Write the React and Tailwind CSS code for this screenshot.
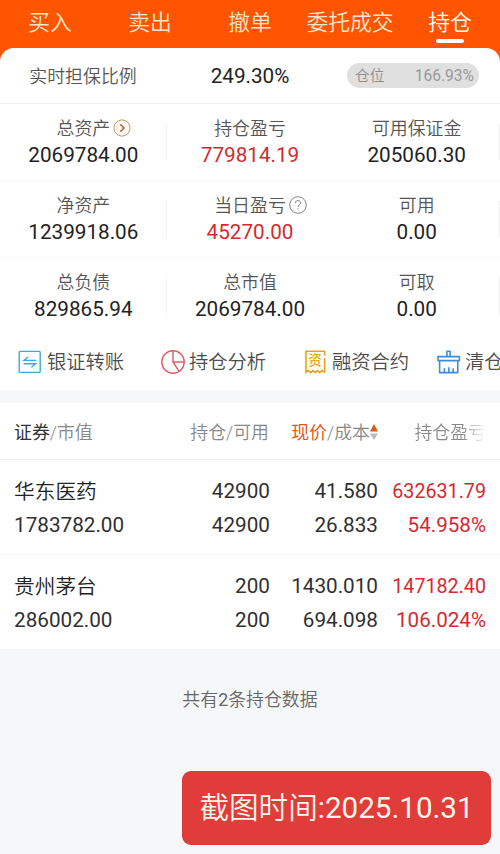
import React from "react";

const tabs = [
  { label: "买入" },
  { label: "卖出" },
  { label: "撤单" },
  { label: "委托成交" },
  { label: "持仓", active: true },
];

function ArrowBadge() {
  return (
    <svg className="h-[18px] w-[18px]" viewBox="0 0 18 18" fill="none">
      <circle cx="9" cy="9" r="8.1" stroke="#c9936c" strokeWidth="1" fill="#fffaf3" />
      <path d="M7.3 5.2 11 9l-3.7 3.8" stroke="#a9602f" strokeWidth="1.5" />
    </svg>
  );
}

function HelpBadge() {
  return (
    <svg className="h-[18px] w-[18px]" viewBox="0 0 18 18" fill="none" stroke="#777" strokeWidth="0.9">
      <circle cx="9" cy="9" r="8.3" />
      <path d="M6.4 7c0-3.3 5.2-3.2 5.2-.2 0 1.9-2.5 2-2.5 4.2M9.1 12.3v1.3" />
    </svg>
  );
}

const summary = [
  [
    { label: "总资产", value: "2069784.00", badge: <ArrowBadge /> },
    { label: "持仓盈亏", value: "779814.19", red: true },
    { label: "可用保证金", value: "205060.30" },
  ],
  [
    { label: "净资产", value: "1239918.06" },
    { label: "当日盈亏", value: "45270.00", red: true, badge: <HelpBadge /> },
    { label: "可用", value: "0.00" },
  ],
  [
    { label: "总负债", value: "829865.94" },
    { label: "总市值", value: "2069784.00" },
    { label: "可取", value: "0.00" },
  ],
];

const positions = [
  { name: "华东医药", value: "1783782.00", held: "42900", free: "42900", price: "41.580", cost: "26.833", gain: "632631.79", rate: "54.958%" },
  { name: "贵州茅台", value: "286002.00", held: "200", free: "200", price: "1430.010", cost: "694.098", gain: "147182.40", rate: "106.024%" },
];

function TransferIcon() {
  return (
    <svg className="h-6 w-6 shrink-0" viewBox="0 0 24 24" fill="none" stroke="#45a5d8" strokeWidth="1.4">
      <rect x="1.2" y="1.4" width="21" height="21" rx="1" />
      <path d="M18.2 10.4H6L10.2 7M5.6 13.8h12L13.4 17.2" />
    </svg>
  );
}

function PieIcon() {
  return (
    <svg className="h-6 w-6 shrink-0" viewBox="0 0 24 24" fill="none" stroke="#df5d68" strokeWidth="1.4">
      <circle cx="12" cy="12" r="11.2" />
      <path d="M12 .8V12h11.2M12 12l6.2 9.3" />
    </svg>
  );
}

function ContractIcon() {
  return (
    <span className="relative flex h-6 w-[22px] shrink-0 items-center justify-center">
      <svg className="absolute inset-0 h-6 w-[22px]" viewBox="0 0 22 24" fill="none" stroke="#e9a31f" strokeWidth="1.6">
        <path d="M19.6 5.5V1.3H1v20.8l2.3-1.6 2.3 2.2 2.3-2.2 2.3 2.2 2.3-2.2 2.3 2.2 2.3-2.2 2.5 1.6V8" />
      </svg>
      <span className="mr-[2px] mb-[3px] text-[13.5px] leading-[20px] font-medium text-[#e9a31f]">资</span>
    </span>
  );
}

function BrushIcon() {
  return (
    <svg className="h-6 w-6 shrink-0" viewBox="0 0 24 24" fill="none" stroke="#3c8edb" strokeWidth="1.6" strokeLinejoin="round">
      <path d="M9.9 6.6V1.2h3.2v5.4M1 6.6h21.4v4H1zM2.6 10.6v12h18.2v-12M7.4 22.6v-4.4M11.8 22.6v-5.4M16.2 22.6v-4.4" />
    </svg>
  );
}

const tools = [
  { label: "银证转账", icon: <TransferIcon />, box: "w-[143px]", gap: "gap-[5px]" },
  { label: "持仓分析", icon: <PieIcon />, box: "w-[144px]", gap: "gap-1" },
  { label: "融资合约", icon: <ContractIcon />, box: "w-[132px]", gap: "gap-[5px]" },
  { label: "清仓", icon: <BrushIcon />, box: "w-[64px]", gap: "gap-1" },
];

function Metric({ item, divider }) {
  return (
    <div className="relative flex flex-1 flex-col items-center pt-[11px]">
      <div className="relative text-[17.9px] leading-[27px] font-[350] text-[#555]">
        {item.label}
        {item.badge && <span className="absolute top-[4px] left-full ml-[3px]">{item.badge}</span>}
      </div>
      <div className={`text-[20.7px] leading-[27px] ${item.red ? "text-[#d7282f]" : "text-[#222]"}`}>{item.value}</div>
      {divider && <i className="absolute top-[20px] right-0 h-9 w-px bg-[#f0f0f0]" />}
    </div>
  );
}

export default function App() {
  return (
    <div className="flex h-[854px] w-[500px] flex-col overflow-hidden bg-[#f6f7f9] font-['Roboto','Noto_Sans_CJK_SC',sans-serif] whitespace-nowrap text-[#303030]">
      <header className="bg-[#ff5500]">
        <nav className="flex h-[48px]">
          {tabs.map((t) => (
            <div key={t.label} className="flex w-[100px] flex-col items-center pt-[7px]">
              <span className={`text-[21.8px] leading-[32px] font-[350] ${t.active ? "text-white" : "text-[#ffe3c8]"}`}>{t.label}</span>
              {t.active && <i className="h-[4px] w-[28px] rounded-full bg-white" />}
            </div>
          ))}
        </nav>
        <div className="flex h-[55px] items-center rounded-t-[14px] bg-white">
          <div className="w-[166px] pt-[3px] text-center text-[17.9px] font-[350] text-[#555]">实时担保比例</div>
          <div className="w-[168px] pt-[2px] text-center text-[20.7px] text-[#222]">249.30%</div>
          <div className="ml-[13px] flex h-[25px] w-[132px] items-center justify-between rounded-full bg-[#e0e0e0] pr-[5px] pl-2 text-[#999]">
            <span className="pt-[2px] text-[14.7px] font-[350] text-[#8c8c8c]">仓位</span>
            <span className="pt-[2px] text-[15.6px]">166.93%</span>
          </div>
        </div>
      </header>

      <section className="bg-white">
        {summary.map((row, i) => (
          <div key={i} className={`flex border-t ${i === 0 ? "h-[77px] border-[#f1f1f1]" : i === 1 ? "h-[77px] border-[#f5f5f5]" : "h-[76px] border-[#f9f9f9]"}`}>
            {row.map((item, j) => (
              <Metric key={item.label} item={item} divider={j !== 1} />
            ))}
          </div>
        ))}
      </section>

      <section className="flex h-[57px] items-center bg-white pl-[18px]">
        {tools.map((t) => (
          <div key={t.label} className={`flex shrink-0 items-center ${t.box} ${t.gap}`}>
            {t.icon}
            <span className="pt-[4px] text-[19.3px] font-[350] text-[#4c4c4c]">{t.label}</span>
          </div>
        ))}
      </section>

      <section className="mt-[13px] bg-white">
        <div className="flex h-[56px] items-center pt-[4px] pl-[14px] text-[17.9px] font-[350] text-[#888]">
          <div className="w-[155px]"><span className="font-normal text-[#333]">证券</span>/市值</div>
          <div className="w-[100px] text-right">持仓/可用</div>
          <div className="flex w-[109px] items-center justify-end">
            <span><span className="font-normal text-[#de5a17]">现价</span>/成本</span>
            <svg className="mb-[2px] h-[16px] w-[8px]" viewBox="0 0 8 16">
              <path d="M4 0 8 7.5H0z" fill="#de5a17" />
              <path d="M4 16 8 9.5H0z" fill="#bbb" />
            </svg>
          </div>
          <div className="w-[108px] bg-linear-to-r from-[#888] from-78% to-transparent to-100% bg-clip-text text-right text-transparent">持仓盈亏</div>
        </div>
        {positions.map((p, i) => (
          <div key={p.name} className={`flex h-[95px] border-t pt-[14px] pl-[14px] text-[20.7px] leading-[34px] ${i ? "border-[#f6f6f6]" : "border-[#f1f1f1]"}`}>
            <div className="w-[155px]">
              <div className="relative top-px font-[350] text-[#222]">{p.name}</div>
              <div>{p.value}</div>
            </div>
            <div className="w-[101px] text-right">
              <div>{p.held}</div>
              <div>{p.free}</div>
            </div>
            <div className="w-[108px] text-right">
              <div>{p.price}</div>
              <div>{p.cost}</div>
            </div>
            <div className="w-[108px] text-right text-[#d7282f]">
              <div className="relative top-px text-[19.7px]">{p.gain}</div>
              <div className="text-[20.6px]">{p.rate}</div>
            </div>
          </div>
        ))}
      </section>

      <p className="mt-[37px] text-center text-[17.9px] leading-[28px] font-[350] text-[#666]">共有<span className="font-normal">2</span>条持仓数据</p>
      <div className="mt-[57px] ml-[182px] flex h-[74px] w-[309px] items-center justify-center rounded-[9px] bg-[#df3c3a] text-[29.6px] font-[350] text-[#fff5ea]">
        <span>截图时间<span className="font-normal">:2025.10.31</span></span>
      </div>
    </div>
  );
}
